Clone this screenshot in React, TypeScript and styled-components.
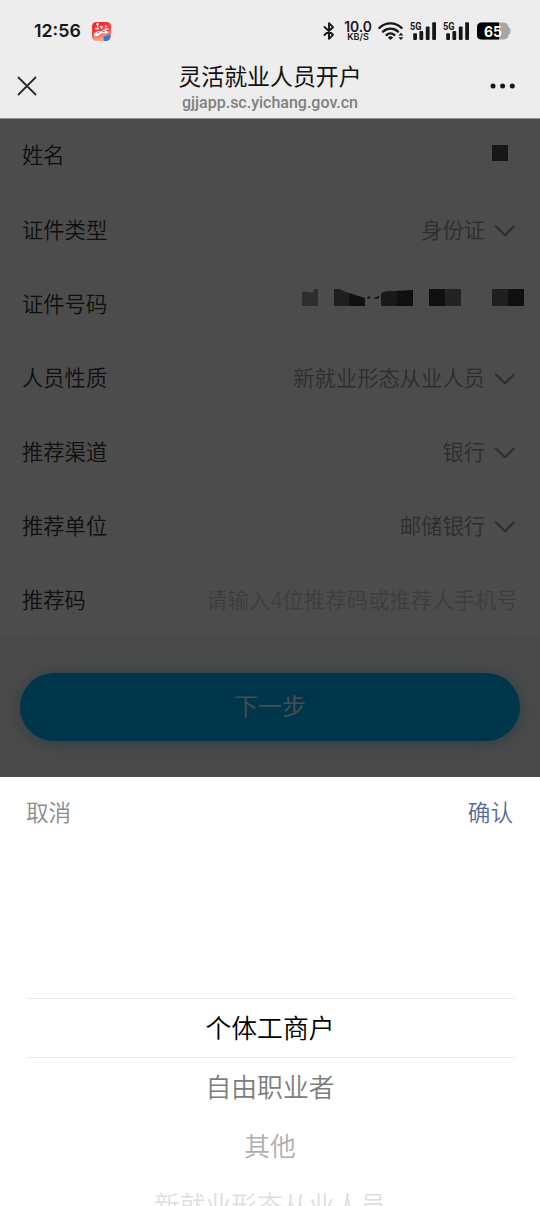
import React from "react";
import styled, { createGlobalStyle } from "styled-components";

const Global = createGlobalStyle`
  * { box-sizing: border-box; }
  html, body { margin: 0; padding: 0; }
  body { width: 540px; height: 1206px; overflow: hidden; background: #fff;
    font-family: Roboto, "Noto Sans CJK SC", sans-serif; }
  button { font: inherit; border: 0; background: none; padding: 0; margin: 0; }
`;

const Screen = styled.main`
  width: 540px;
  height: 1206px;
  display: flex;
  flex-direction: column;
  overflow: hidden;
  font-weight: 350;
`;
const Top = styled.header`
  height: 119px;
  flex: none;
  background: #ededed;
  border-bottom: 1px solid #939393;
`;
const StatusBar = styled.div`
  height: 56px;
  padding: 6px 29px 0 34px;
  display: flex;
  align-items: center;
  color: #171717;
`;
const Clock = styled.span`
  font: 600 17.8px/22px Inter, sans-serif;
  width: 58px;
  white-space: nowrap;
`;
const StatusIcons = styled.div`
  margin-left: auto;
  display: flex;
  align-items: center;
`;
const Speed = styled.div`
  width: 28px;
  margin: 0 6px 0 9px;
  display: flex;
  flex-direction: column;
  align-items: center;
  font-family: Inter, sans-serif;
  font-weight: 600;
  white-space: nowrap;
`;
const SpeedValue = styled.span`
  font-size: 13.8px;
  line-height: 11px;
`;
const SpeedUnit = styled.span`
  font-size: 9px;
  line-height: 8px;
`;
const Signals = styled.div`
  display: flex;
  gap: 6px;
  margin: 0 7px 0 6px;
`;
const NavBar = styled.div`
  height: 62px;
  display: grid;
  grid-template-columns: 80px 1fr 80px;
  align-items: center;
`;
const NavSide = styled.div<{ $end?: boolean }>`
  display: flex;
  justify-content: ${(p) => (p.$end ? "flex-end" : "flex-start")};
  padding: ${(p) => (p.$end ? "0 24px 2px 0" : "0 0 2px 17px")};
`;
const Titles = styled.div`
  display: flex;
  flex-direction: column;
  align-items: center;
  padding-top: 2px;
  white-space: nowrap;
`;
const Title = styled.h1`
  margin: 0;
  font-size: 22.9px;
  line-height: 30px;
  font-weight: 400;
  color: #111;
`;
const Host = styled.span`
  font-size: 16px;
  line-height: 20px;
  font-weight: 500;
  color: #808080;
`;
const Page = styled.section`
  position: relative;
  height: 658px;
  flex: none;
  background: #f4f4f4;
  overflow: hidden;
`;
const Shade = styled.div`
  position: absolute;
  inset: 0;
  background: rgba(0, 0, 0, 0.7);
`;
const Form = styled.div`
  background: #fff;
`;
const Row = styled.div`
  height: 74px;
  padding: 3px 15px 0 22px;
  display: flex;
  align-items: center;
  justify-content: space-between;
  font-size: 21.3px;
  line-height: 30px;
  white-space: nowrap;
  background: linear-gradient(#f5f5f5, #f5f5f5) 26px 73px / 487px 1px no-repeat;
  &:first-child { height: 73px; padding-top: 1px; background-position: 26px 72px; }
  &:last-child { height: 75px; padding-top: 2px; }
`;
const Label = styled.span`
  color: #333;
`;
const Value = styled.span`
  display: flex;
  align-items: center;
  gap: 9px;
  padding-right: 9px;
  color: #999;
`;
const Placeholder = styled.span`
  color: #ccc;
  font-size: 21.45px;
  padding-right: 7px;
`;
const Submit = styled.button`
  display: block;
  width: 500px;
  height: 68px;
  margin: 36px auto 0 20px;
  border-radius: 34px;
  background: #00b4fa;
  box-shadow: 0 2px 14px rgba(0, 150, 220, 0.4);
  color: #fff;
  font-size: 24px;
  line-height: 69px;
  text-align: center;
`;
const Sheet = styled.section`
  flex: 1;
  background: #fff;
  overflow: hidden;
`;
const Actions = styled.div`
  height: 72px;
  padding: 2px 26px;
  display: flex;
  align-items: center;
  justify-content: space-between;
`;
const Action = styled.button<{ $primary?: boolean }>`
  font-size: 22.6px;
  line-height: 32px;
  padding: ${(p) => (p.$primary ? "2px 1px 0 0" : "2px 0 0")};
  color: ${(p) => (p.$primary ? "#576b95" : "#8a8a8a")};
`;
const Wheel = styled.div`
  padding: 149px 26px 0;
`;
const Option = styled.div<{ $color: string; $selected?: boolean }>`
  height: ${(p) => (p.$selected ? 60 : 59)}px;
  line-height: ${(p) => (p.$selected ? 60 : 61)}px;
  border: solid #ececec;
  border-width: ${(p) => (p.$selected ? "1px 0" : "0")};
  text-align: center;
  font-size: 25.8px;
  white-space: nowrap;
  color: ${(p) => p.$color};
`;

const AppBadge = () => (
  <svg width="19" height="19" viewBox="0 0 19 19">
    <defs>
      <linearGradient id="badge" x1="0" y1="0" x2="0.3" y2="1">
        <stop offset="0" stopColor="#f21d20" />
        <stop offset="0.6" stopColor="#f4474a" />
        <stop offset="1" stopColor="#ffb38a" />
      </linearGradient>
    </defs>
    <rect width="19" height="19" rx="4.5" fill="url(#badge)" />
    <path d="M4 2.5 6 1.5 5.5 5M3 6.5h4M8 4l2 2.5M10.5 4l-1 3M13 3.5l2 1.5M12.5 7h4" stroke="#ffd9d5" strokeWidth="1.3" fill="none" />
    <path d="M2 11.5 6 9l3 .5 3-2 3 1.5 1.5 1.5-3 1-2-.5-3 1-3 2-3 .5Z" fill="#fff" />
    <path d="M5 11.5 7.5 10M10 10l3-1" stroke="#6d4a4a" strokeWidth=".8" />
    <path d="M11.5 14.5 18.5 12v2.5a4.5 4.5 0 0 1-4.5 4.5h-2.5Z" fill="#3978da" />
  </svg>
);

const Bluetooth = () => (
  <svg width="12" height="20" viewBox="0 0 12 20" fill="none" stroke="#171717" strokeWidth="1.9" strokeLinejoin="round" strokeLinecap="round">
    <path d="M1.5 6 10 13.8 6 17.8V2.2l4 4L1.5 14" />
  </svg>
);

const Wifi = () => (
  <svg width="26" height="20" viewBox="0 0 26 20">
    <g fill="none" stroke="#171717" strokeWidth="2.4" strokeLinecap="round">
      <path d="M1.5 6.8a16 16 0 0 1 22 0" />
      <path d="M5 10.6a11 11 0 0 1 15 0" />
      <path d="M8.600 14a6 6 0 0 1 7.800 0" />
    </g>
    <path d="M9.8 16.200q2.700-2 5.400 0L12.500 19Z" fill="#171717" />
    <path d="m20.400 14.500 2.500-2.700 2.500 2.700ZM20.400 16.300h5l-2.500 2.700Z" fill="#171717" />
  </svg>
);

const Signal = () => (
  <svg width="27" height="20" viewBox="0 0 27 20" fill="#171717">
    <text x="0" y="9" fontFamily="Roboto, sans-serif" fontWeight="700" fontSize="11" textLength="11.5" lengthAdjust="spacingAndGlyphs">5G</text>
    <rect x="3.2" y="12.2" width="3.8" height="6.8" rx="1" />
    <rect x="9.4" y="10" width="3.8" height="9" rx="1" />
    <rect x="15.8" y="5.5" width="3.8" height="13.5" rx="1" />
    <rect x="22.2" y="1.2" width="3.8" height="17.8" rx="1" />
  </svg>
);

const Battery = () => (
  <svg width="34" height="18" viewBox="0 0 34 18">
    <path d="M5 .5h21q5 0 5.5 4.5l1.8 1.700v4.600L31.500 13q-.5 4.500-5.500 4.500H5q-5 0-5-4.500V5Q0 .5 5 .5Z" fill="#a6a6a6" />
    <path d="M5 .5h17v17H5q-5 0-5-4.500V5Q0 .5 5 .5Z" fill="#000" />
    <text x="7" y="14.500" fill="#fff" fontFamily="Inter, sans-serif" fontWeight="700" fontSize="14.500" textLength="18" lengthAdjust="spacingAndGlyphs">65</text>
  </svg>
);

const Chevron = () => (
  <svg width="22" height="14" viewBox="0 0 22 14" fill="none" stroke="#999" strokeWidth="2.2" strokeLinecap="round" strokeLinejoin="round">
    <path d="m2 2.500 9 8.700 9-8.700" />
  </svg>
);

const Mask = styled.svg<{ $right: number; $lift: number }>`
  display: block;
  margin: 0 ${(p) => p.$right}px ${(p) => p.$lift}px 0;
`;

const NameMask = () => (
  <Mask $right={17} $lift={7} width="16" height="16" viewBox="0 0 16 16">
    <rect width="16" height="16" fill="#4e4e4e" />
  </Mask>
);

const NumberMask = () => (
  <Mask $right={1} $lift={9} width="222" height="22" viewBox="0 0 222 22">
    <path d="M0 2.500 11 3.500 12 0h4v17H0Z" fill="#969696" />
    <path d="M32 0h5l10 4v13H32Z" fill="#686868" />
    <path d="m47 4 16 5v8H47Z" fill="#363636" />
    <path d="M65 8.500 68 7v2.500h-3ZM72 9l5-2v2l-4 1Z" fill="#222" />
    <path d="M79 5q2-3 8-3h8v15H79Z" fill="#565656" />
    <path d="m95 1.800 16-.8v16H95Z" fill="#343434" />
    <rect x="127" width="16" height="17" fill="#363636" />
    <rect x="143" width="16" height="17" fill="#777" />
    <rect x="190" width="16" height="17" fill="#686868" />
    <rect x="206" width="16" height="17" fill="#343434" />
  </Mask>
);

const fields: { label: string; value?: string; mask?: "name" | "number"; hint?: string }[] = [
  { label: "姓名", mask: "name" },
  { label: "证件类型", value: "身份证" },
  { label: "证件号码", mask: "number" },
  { label: "人员性质", value: "新就业形态从业人员" },
  { label: "推荐渠道", value: "银行" },
  { label: "推荐单位", value: "邮储银行" },
  { label: "推荐码", hint: "请输入4位推荐码或推荐人手机号" },
];

const options = [
  { text: "个体工商户", color: "#000", selected: true },
  { text: "自由职业者", color: "#7c7c7c" },
  { text: "其他", color: "#aeaeae" },
  { text: "新就业形态从业人员", color: "#dedede" },
];

export default function App() {
  return (
    <Screen>
      <Global />
      <Top>
        <StatusBar>
          <Clock>12:56</Clock>
          <AppBadge />
          <StatusIcons>
            <Bluetooth />
            <Speed>
              <SpeedValue>10.0</SpeedValue>
              <SpeedUnit>KB/S</SpeedUnit>
            </Speed>
            <Wifi />
            <Signals>
              <Signal />
              <Signal />
            </Signals>
            <Battery />
          </StatusIcons>
        </StatusBar>
        <NavBar>
          <NavSide>
            <svg width="20" height="20" viewBox="0 0 20 20" stroke="#2a2a2a" strokeWidth="1.8" strokeLinecap="round">
              <path d="m1.500 1.500 17 17M18.500 1.500l-17 17" />
            </svg>
          </NavSide>
          <Titles>
            <Title>灵活就业人员开户</Title>
            <Host>gjjapp.sc.yichang.gov.cn</Host>
          </Titles>
          <NavSide $end>
            <svg width="26" height="6" viewBox="0 0 26 6" fill="#171717">
              <circle cx="3" cy="3" r="2.500" />
              <circle cx="12.600" cy="3" r="2.500" />
              <circle cx="22.300" cy="3" r="2.500" />
            </svg>
          </NavSide>
        </NavBar>
      </Top>
      <Page>
        <Form>
          {fields.map((f) => (
            <Row key={f.label}>
              <Label>{f.label}</Label>
              {f.value && (
                <Value>
                  {f.value}
                  <Chevron />
                </Value>
              )}
              {f.mask === "name" && <NameMask />}
              {f.mask === "number" && <NumberMask />}
              {f.hint && <Placeholder>{f.hint}</Placeholder>}
            </Row>
          ))}
        </Form>
        <Submit>下一步</Submit>
        <Shade />
      </Page>
      <Sheet>
        <Actions>
          <Action>取消</Action>
          <Action $primary>确认</Action>
        </Actions>
        <Wheel>
          {options.map((o) => (
            <Option key={o.text} $color={o.color} $selected={o.selected}>
              {o.text}
            </Option>
          ))}
        </Wheel>
      </Sheet>
    </Screen>
  );
}
